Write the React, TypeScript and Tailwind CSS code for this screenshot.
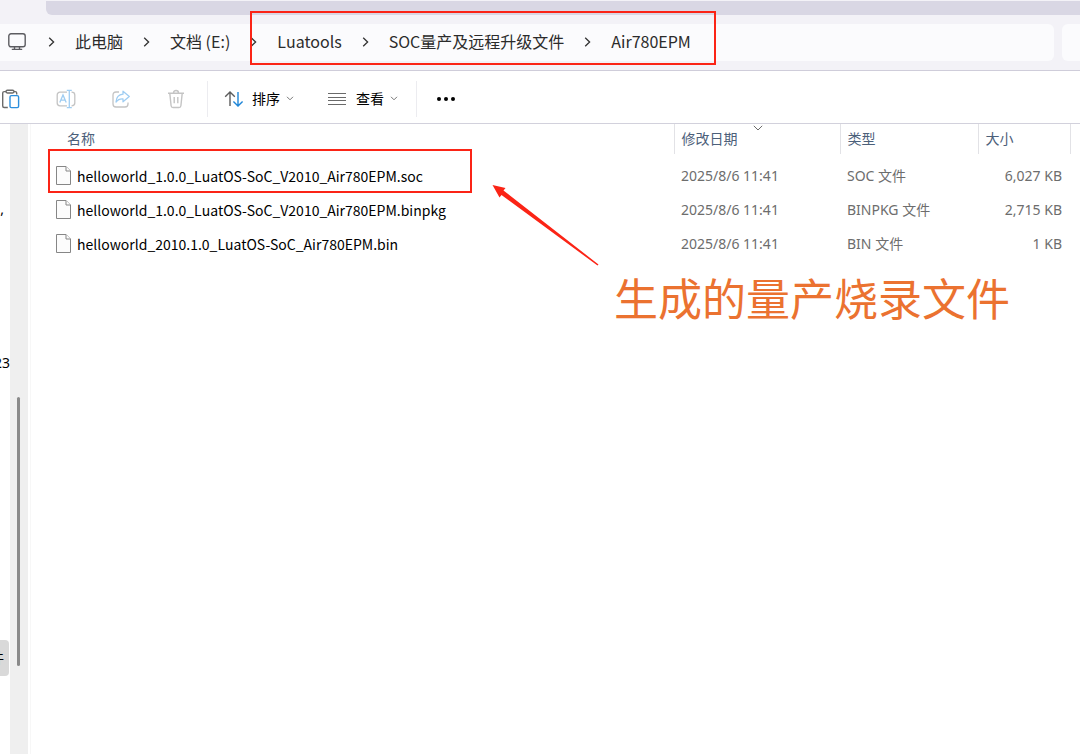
import { Fragment } from "react";
import type { ReactNode } from "react";

const crumbs = ["此电脑", "文档 (E:)", "Luatools", "SOC量产及远程升级文件", "Air780EPM"];

const files = [
  { name: "helloworld_1.0.0_LuatOS-SoC_V2010_Air780EPM.soc", date: "2025/8/6 11:41", type: "SOC 文件", size: "6,027 KB" },
  { name: "helloworld_1.0.0_LuatOS-SoC_V2010_Air780EPM.binpkg", date: "2025/8/6 11:41", type: "BINPKG 文件", size: "2,715 KB" },
  { name: "helloworld_2010.1.0_LuatOS-SoC_Air780EPM.bin", date: "2025/8/6 11:41", type: "BIN 文件", size: "1 KB" },
];

function MonitorIcon() {
  return (
    <svg width="18" height="18" viewBox="0 0 18 18" fill="none" stroke="#5c5c61" strokeWidth="1.4" className="mr-0.5 shrink-0">
      <rect x="0.8" y="0.8" width="16.4" height="13" rx="2.2" />
      <path d="M6.5 13.8v2.4M11.5 13.8v2.4M3.8 16.4h10.4" />
    </svg>
  );
}

function Chevron() {
  return (
    <svg width="7" height="10" viewBox="0 0 7 10" fill="none" stroke="#333" strokeWidth="1.3" className="shrink-0">
      <path d="M1.2 0.8 5.6 5 1.2 9.2" />
    </svg>
  );
}

function CaretDown() {
  return (
    <svg width="8" height="5" viewBox="0 0 8 5" fill="none" stroke="#777" strokeWidth="1">
      <path d="M1 0.8 4 3.8 7 0.8" />
    </svg>
  );
}

function PasteIcon() {
  return (
    <svg width="20" height="20" viewBox="0 0 20 20" fill="none" strokeWidth="1.4">
      <path d="M5 2.6H3.2C2.3 2.6 1.7 3.2 1.7 4.1V17c0 .9.6 1.5 1.5 1.5h3.6M13 2.6h1.2c.9 0 1.5.6 1.5 1.5v1.4" stroke="#6b6b6b" />
      <rect x="5" y="1.2" width="8" height="2.8" rx="1.4" stroke="#6b6b6b" />
      <rect x="9" y="6.6" width="8.6" height="12" rx="1.4" stroke="#2d8fdd" />
    </svg>
  );
}

function RenameIcon() {
  return (
    <svg width="20" height="20" viewBox="0 0 20 20" fill="none" strokeWidth="1.3">
      <path d="M11 3.2H4C2.4 3.2 1.2 4.4 1.2 6v8c0 1.6 1.2 2.8 2.8 2.8h7M15.5 3.2c2 0 3.3 1.2 3.3 2.8v8c0 1.6-1.3 2.8-3.3 2.8" stroke="#c4c4c4" />
      <path d="M3.8 13.6 7 6l3.2 7.6M4.9 11.2h4.2M13.3 1.5v17M10.8 1.3h5M10.8 18.7h5" stroke="#9fcdf2" />
    </svg>
  );
}

function ShareIcon() {
  return (
    <svg width="20" height="20" viewBox="0 0 20 20" fill="none" strokeWidth="1.3" strokeLinejoin="round">
      <path d="M8 3H5C3.2 3 2 4.2 2 6v9c0 1.8 1.2 3 3 3h9c1.8 0 3-1.2 3-3v-1.5" stroke="#c4c4c4" />
      <path d="M12 2.2 18.3 7.5 12 12.8V9.8c-3.2-.2-5.3.8-7 3.2.3-4.2 2.6-7.4 7-7.8Z" stroke="#9fcdf2" />
    </svg>
  );
}

function TrashIcon() {
  return (
    <svg width="20" height="20" viewBox="0 0 20 20" fill="none" stroke="#c4c4c4" strokeWidth="1.4">
      <path d="M2 4.2h16M7.5 4C7.5 .7 12.5 .7 12.5 4M3.8 4.4l1.3 12.3c.1 1 .8 1.8 1.9 1.8h6c1.1 0 1.8-.8 1.9-1.8l1.3-12.3M8.2 8v6.2M11.8 8v6.2" />
    </svg>
  );
}

function SortIcon() {
  return (
    <svg width="20" height="18" viewBox="0 0 20 18" fill="none" strokeWidth="1.4" className="mr-0.5">
      <path d="M6 16V2M1.2 6.8 6 2l4.8 4.8" stroke="#5c5c5c" />
      <path d="M14 2v14M9.4 11.4 14 16l4.6-4.6" stroke="#1f86d8" />
    </svg>
  );
}

function ListIcon() {
  return (
    <svg width="18" height="12" viewBox="0 0 18 12" stroke="#6a6a6a" strokeWidth="1" className="mr-1">
      <path d="M0 .5h18M0 4.5h18M0 7.5h18M0 11.5h18" />
    </svg>
  );
}

function FileIcon() {
  return (
    <svg width="15" height="19" viewBox="0 0 15 19" fill="#fcfcfc" stroke="#868686" strokeWidth="1" className="mb-0.5 shrink-0">
      <path d="M.5.5h9.5l4.5 4.5v13.5H.5Z" />
      <path d="M10 .5v4.5H14.5" />
    </svg>
  );
}

function ToolButton({ label, children }: { label: string; children: ReactNode }) {
  return (
    <button type="button" aria-label={label} className="flex size-5 items-center justify-center">
      {children}
    </button>
  );
}

function AddressBar() {
  return (
    <header className="border-b border-[#cfcdda] bg-[#f3f2f7] pt-px">
      <div className="ml-[46px] h-[14px] rounded-bl-md bg-[#d9d7e4]" />
      <div className="flex gap-2 pt-[9px] pb-[9px]">
        <nav
          aria-label="路径"
          className="flex h-[37px] flex-1 items-center gap-5 rounded-r-md bg-[#fbfbfd] pb-0.5 pl-2 font-['Noto_Sans_CJK_SC',sans-serif] text-base whitespace-nowrap text-[#2b2b2b]"
        >
          <MonitorIcon />
          {crumbs.map((crumb) => (
            <Fragment key={crumb}>
              <Chevron />
              <a href="#" className="pb-0.5">{crumb}</a>
            </Fragment>
          ))}
        </nav>
        <div className="h-[37px] w-[18px] rounded-l-md bg-[#fbfbfd]" />
      </div>
    </header>
  );
}

function Toolbar() {
  return (
    <div className="flex h-[53px] items-center border-b border-[#d2d1dc] bg-white pt-[3px] text-sm text-black">
      <div className="flex gap-[35px] pr-[21px] pl-px">
        <ToolButton label="粘贴"><PasteIcon /></ToolButton>
        <ToolButton label="重命名"><RenameIcon /></ToolButton>
        <ToolButton label="共享"><ShareIcon /></ToolButton>
        <ToolButton label="删除"><TrashIcon /></ToolButton>
      </div>
      <div className="flex h-9 items-center gap-[34px] border-x border-[#ececf0] pr-[18px] pl-4">
        <button type="button" className="flex items-center gap-1.5">
          <SortIcon />
          排序
          <CaretDown />
        </button>
        <button type="button" className="flex items-center gap-1.5">
          <ListIcon />
          查看
          <CaretDown />
        </button>
      </div>
      <button type="button" aria-label="更多" className="ml-5 flex gap-[3px]">
        <span className="size-1 rounded-full bg-black" />
        <span className="size-1 rounded-full bg-black" />
        <span className="size-1 rounded-full bg-black" />
      </button>
    </div>
  );
}

function Sidebar() {
  return (
    <aside className="flex w-[31px] shrink-0 border-r border-[#f7f7f7] text-sm text-black">
      <div className="flex w-[10px] flex-col overflow-hidden pt-[75px]">
        <div className="flex h-5 justify-end pr-[6px]">,</div>
        <div className="mt-[134px] flex h-5 justify-end">23</div>
        <div className="mt-[267px] mr-px flex h-[36px] items-center justify-end overflow-hidden rounded-r-sm bg-[#d9d9d9] pr-[5px]">件</div>
      </div>
      <div className="w-[18px] bg-[#efefef] pt-[273px]">
        <div className="ml-[7px] h-[269px] w-[3px] rounded-full bg-[#8a8a8a]" />
      </div>
    </aside>
  );
}

function FileTable() {
  return (
    <table className="w-full table-fixed border-collapse self-start text-left text-sm whitespace-nowrap">
      <colgroup>
        <col />
        <col className="w-[166px]" />
        <col className="w-[138px]" />
        <col className="w-[92px]" />
        <col className="w-[10px]" />
      </colgroup>
      <thead className="text-[#4c607a]">
        <tr className="h-[30px]">
          <th className="border-r border-[#e2e2e6] p-0 pl-9 font-normal">名称</th>
          <th className="relative border-r border-[#e2e2e6] p-0 pl-[7px] font-normal" aria-sort="descending">
            修改日期
            <svg width="10" height="6" viewBox="0 0 10 6" fill="none" stroke="#6b6b6b" className="absolute top-px left-[78px]">
              <path d="M.8.8 5 5 9.2.8" />
            </svg>
          </th>
          <th className="border-r border-[#e2e2e6] p-0 pl-[7px] font-normal">类型</th>
          <th className="border-r border-[#e2e2e6] p-0 pl-[7px] font-normal">大小</th>
          <td />
        </tr>
      </thead>
      <tbody className="text-[#6d6d6d]">
        <tr className="h-[5px]" />
        {files.map((file) => (
          <tr key={file.name} className="h-[34px]">
            <td className="p-0 pl-[25px]">
              <div className="flex items-center gap-1.5 font-['Noto_Sans_CJK_SC',sans-serif] text-black">
                <FileIcon />
                {file.name}
              </div>
            </td>
            <td className="p-0 pl-[7px]">{file.date}</td>
            <td className="p-0 pl-[7px]">{file.type}</td>
            <td className="p-0 pr-2 text-right">{file.size}</td>
            <td />
          </tr>
        ))}
      </tbody>
    </table>
  );
}

function Annotations() {
  return (
    <div className="pointer-events-none">
      <div className="absolute top-[11px] left-[250px] h-[54px] w-[466px] border-2 border-[#fb2416]" />
      <div className="absolute top-[149px] left-[48px] h-[44px] w-[424px] border-2 border-[#fb2416]" />
      <svg width="108" height="82" viewBox="0 0 108 82" fill="#fb2416" className="absolute top-[184px] left-[491px]">
        <path d="M1.5 1 14.5 4 12.5 6.5 107.5 80.5 106.5 81.5 10.5 11 8.5 13.5Z" />
      </svg>
      <p className="absolute top-[264px] left-[614px] font-['Noto_Sans_CJK_SC',sans-serif] text-[44px] leading-[66px] whitespace-nowrap text-[#eb7230]">
        生成的量产烧录文件
      </p>
    </div>
  );
}

export default function App() {
  return (
    <main className="relative flex min-h-screen flex-col overflow-hidden bg-white font-['Noto_Sans','Noto_Sans_CJK_SC',sans-serif]">
      <AddressBar />
      <Toolbar />
      <div className="flex flex-1">
        <Sidebar />
        <FileTable />
      </div>
      <Annotations />
    </main>
  );
}
